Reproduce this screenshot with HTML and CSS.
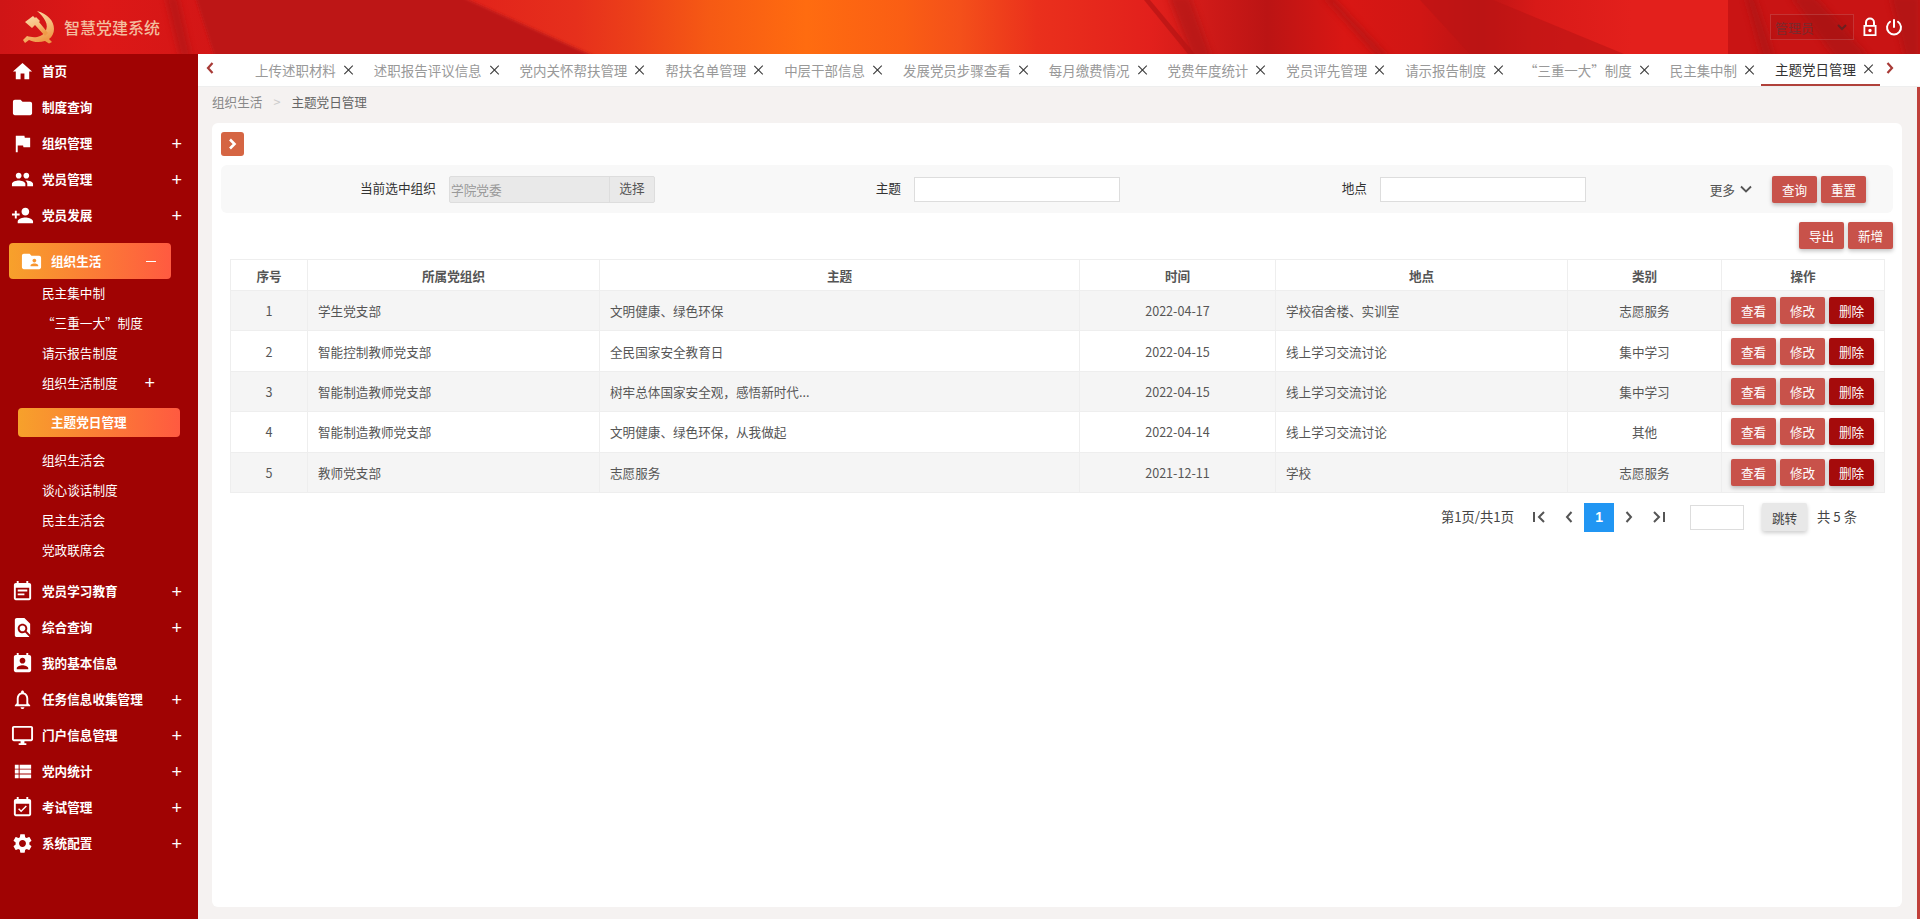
FILE: index.html
```html
<!DOCTYPE html>
<html lang="zh-CN">

<head>
    <meta charset="UTF-8">
    <meta name="viewport" content="width=device-width, initial-scale=1.0">
    <title>智慧党建系统</title>
    <link rel="stylesheet" href="styles.css">
</head>

<body>
    <!-- icon set -->
    <svg class="icon-defs" aria-hidden="true">
        <symbol id="i-home" viewBox="0 0 24 24"><path d="M10 20v-6h4v6h5v-8h3L12 3 2 12h3v8z"/></symbol>
        <symbol id="i-folder" viewBox="0 0 24 24"><path d="M10 4H4c-1.1 0-1.99.9-1.99 2L2 18c0 1.1.9 2 2 2h16c1.1 0 2-.9 2-2V8c0-1.1-.9-2-2-2h-8l-2-2z"/></symbol>
        <symbol id="i-flag" viewBox="0 0 24 24"><path d="M14.4 6L14 4H5v17h2v-7h5.6l.4 2h7V6z"/></symbol>
        <symbol id="i-people" viewBox="0 0 24 24"><path d="M16 11c1.66 0 2.99-1.34 2.99-3S17.66 5 16 5c-1.66 0-3 1.34-3 3s1.34 3 3 3zm-8 0c1.66 0 2.99-1.34 2.99-3S9.66 5 8 5C6.34 5 5 6.34 5 8s1.34 3 3 3zm0 2c-2.33 0-7 1.17-7 3.5V19h14v-2.5c0-2.33-4.67-3.5-7-3.5zm8 0c-.29 0-.62.02-.97.05 1.16.84 1.97 1.97 1.97 3.45V19h6v-2.5c0-2.33-4.67-3.5-7-3.5z"/></symbol>
        <symbol id="i-person-add" viewBox="0 0 24 24"><path d="M15 12c2.21 0 4-1.79 4-4s-1.79-4-4-4-4 1.79-4 4 1.79 4 4 4zm-9-2V7H4v3H1v2h3v3h2v-3h3v-2H6zm9 4c-2.67 0-8 1.34-8 4v2h16v-2c0-2.66-5.33-4-8-4z"/></symbol>
        <symbol id="i-folder-shared" viewBox="0 0 24 24"><path d="M20 6h-8l-2-2H4c-1.1 0-1.99.9-1.99 2L2 18c0 1.1.9 2 2 2h16c1.1 0 2-.9 2-2V8c0-1.1-.9-2-2-2zm-5 3c1.1 0 2 .9 2 2s-.9 2-2 2-2-.9-2-2 .9-2 2-2zm4 8h-8v-1c0-1.33 2.67-2 4-2s4 .67 4 2v1z"/></symbol>
        <symbol id="i-event-note" viewBox="0 0 24 24"><path d="M17 10H7v2h10v-2zm2-7h-1V1h-2v2H8V1H6v2H5c-1.11 0-1.99.9-1.99 2L3 19c0 1.1.89 2 2 2h14c1.1 0 2-.9 2-2V5c0-1.1-.9-2-2-2zm0 16H5V8h14v11zm-5-5H7v2h7v-2z"/></symbol>
        <symbol id="i-find" viewBox="0 0 24 24"><path d="M20 19.59V8l-6-6H6c-1.1 0-1.99.9-1.99 2L4 20c0 1.1.89 2 1.99 2H18c.45 0 .85-.15 1.19-.4l-4.43-4.43c-.8.52-1.74.83-2.76.83-2.76 0-5-2.24-5-5s2.24-5 5-5 5 2.24 5 5c0 1.02-.31 1.96-.83 2.75L20 19.59zM9 13c0 1.66 1.34 3 3 3s3-1.34 3-3-1.34-3-3-3-3 1.34-3 3z"/></symbol>
        <symbol id="i-contact" viewBox="0 0 24 24"><path d="M19 3h-1V1h-2v2H8V1H6v2H5c-1.11 0-2 .9-2 2v14c0 1.1.89 2 2 2h14c1.1 0 2-.9 2-2V5c0-1.1-.9-2-2-2zm-7 3c1.66 0 3 1.34 3 3s-1.34 3-3 3-3-1.34-3-3 1.34-3 3-3zm6 12H6v-1c0-2 4-3.1 6-3.1s6 1.1 6 3.1v1z"/></symbol>
        <symbol id="i-bell" viewBox="0 0 24 24"><path d="M12 22c1.1 0 2-.9 2-2h-4c0 1.1.9 2 2 2zm6-6v-5c0-3.07-1.63-5.64-4.5-6.32V4c0-.83-.67-1.5-1.5-1.5s-1.5.67-1.5 1.5v.68C7.64 5.36 6 7.92 6 11v5l-2 2v1h16v-1l-2-2zm-2 1H8v-6c0-2.48 1.51-4.5 4-4.5s4 2.02 4 4.5v6z"/></symbol>
        <symbol id="i-desktop" viewBox="0 0 24 24"><path d="M21 2H3c-1.1 0-2 .9-2 2v12c0 1.1.9 2 2 2h7v2H8v2h8v-2h-2v-2h7c1.1 0 2-.9 2-2V4c0-1.1-.9-2-2-2zm0 14H3V4h18v12z"/></symbol>
        <symbol id="i-list" viewBox="0 0 24 24"><path d="M4 14h4v-4H4v4zm0 5h4v-4H4v4zM4 9h4V5H4v4zm5 5h12v-4H9v4zm0 5h12v-4H9v4zM9 5v4h12V5H9z"/></symbol>
        <symbol id="i-event-ok" viewBox="0 0 24 24"><path d="M16.53 11.06L15.47 10l-4.88 4.88-2.12-2.12-1.06 1.06L10.59 17l5.94-5.94zM19 3h-1V1h-2v2H8V1H6v2H5c-1.11 0-1.99.9-1.99 2L3 19c0 1.1.89 2 2 2h14c1.1 0 2-.9 2-2V5c0-1.1-.9-2-2-2zm0 16H5V8h14v11z"/></symbol>
        <symbol id="i-settings" viewBox="0 0 24 24"><path d="M19.14 12.94c.04-.3.06-.61.06-.94 0-.32-.02-.64-.07-.94l2.03-1.58c.18-.14.23-.41.12-.61l-1.92-3.32c-.12-.22-.37-.29-.59-.22l-2.39.96c-.5-.38-1.03-.7-1.62-.94l-.36-2.54c-.04-.24-.24-.41-.48-.41h-3.84c-.24 0-.43.17-.47.41l-.36 2.54c-.59.24-1.13.57-1.62.94l-2.39-.96c-.22-.08-.47 0-.59.22L2.74 8.87c-.12.21-.08.47.12.61l2.03 1.58c-.05.3-.09.63-.09.94s.02.64.07.94l-2.03 1.58c-.18.14-.23.41-.12.61l1.92 3.32c.12.22.37.29.59.22l2.39-.96c.5.38 1.03.7 1.62.94l.36 2.54c.05.24.24.41.48.41h3.84c.24 0 .44-.17.47-.41l.36-2.54c.59-.24 1.13-.56 1.62-.94l2.39.96c.22.08.47 0 .59-.22l1.92-3.32c.12-.22.07-.47-.12-.61l-2.01-1.58zM12 15.6c-1.98 0-3.6-1.62-3.6-3.6s1.62-3.6 3.6-3.6 3.6 1.62 3.6 3.6-1.62 3.6-3.6 3.6z"/></symbol>
    </svg>

    <header class="header">
        <svg class="header-bg" viewBox="0 0 1920 54" preserveAspectRatio="none" aria-hidden="true">
            <defs>
                <linearGradient id="bannerBase" gradientUnits="userSpaceOnUse" x1="0" y1="0" x2="1920" y2="0">
                    <stop offset="0" stop-color="#cf1516"/>
                    <stop offset="0.05" stop-color="#dd1817"/>
                    <stop offset="0.13" stop-color="#d01616"/>
                    <stop offset="0.25" stop-color="#e2241b"/>
                    <stop offset="0.3" stop-color="#e6301c"/>
                    <stop offset="0.33" stop-color="#ec4019"/>
                    <stop offset="0.37" stop-color="#f65a14"/>
                    <stop offset="0.42" stop-color="#ff6c10"/>
                    <stop offset="0.47" stop-color="#fa5e14"/>
                    <stop offset="0.5" stop-color="#f4501a"/>
                    <stop offset="0.54" stop-color="#ea301c"/>
                    <stop offset="0.6" stop-color="#e2201c"/>
                    <stop offset="0.66" stop-color="#bb1414"/>
                    <stop offset="0.7" stop-color="#d91714"/>
                    <stop offset="0.74" stop-color="#d01614"/>
                    <stop offset="0.77" stop-color="#bc1414"/>
                    <stop offset="0.8" stop-color="#d81a18"/>
                    <stop offset="0.85" stop-color="#e3201c"/>
                    <stop offset="1" stop-color="#e3201c"/>
                </linearGradient>
                <filter id="soft" x="-20%" y="-20%" width="140%" height="140%"><feGaussianBlur stdDeviation="3"/></filter>
                <filter id="edge" x="-5%" y="-20%" width="110%" height="140%"><feGaussianBlur stdDeviation="1.5"/></filter>
            </defs>
            <rect width="1920" height="54" fill="url(#bannerBase)"/>
            <polygon points="195,-4 460,-4 598,58 215,58" fill="#bd1414" filter="url(#edge)"/>
            <g filter="url(#soft)" fill="#a81212" opacity="0.55">
                <polygon points="165,-4 178,-4 192,58 180,58"/>
                <polygon points="1168,-4 1190,-4 1212,58 1192,58"/>
                <polygon points="1322,-4 1332,-4 1390,58 1378,58"/>
            </g>
            <polygon points="1144,0 1150,0 1195,54 1188,54" fill="#b51414" opacity="0.7"/>
            <polygon points="1420,0 1493,0 1624,54 1470,54" fill="#bb1414" opacity="0.6"/>
            <rect x="1728" width="192" height="54" fill="#c91414"/>
            <g filter="url(#soft)" fill="#a81212" opacity="0.6">
                <polygon points="1745,-4 1755,-4 1775,58 1762,58"/>
                <polygon points="1790,-4 1815,-4 1870,58 1835,58"/>
                <polygon points="1890,-4 1920,-4 1920,58 1905,58"/>
            </g>
        </svg>

        <div class="brand">
            <svg class="brand-logo" viewBox="0 0 32 33" aria-hidden="true">
                <defs>
                    <linearGradient id="gold" x1="0" y1="0" x2="0.4" y2="1">
                        <stop offset="0" stop-color="#fbdca8"/>
                        <stop offset="0.6" stop-color="#f6bd7c"/>
                        <stop offset="1" stop-color="#ef9a48"/>
                    </linearGradient>
                </defs>
                <path fill="url(#gold)" d="M14 0C25 3 31 10 31 18C31 22 29 26 26 28L29 31L26 32.5L22 30C16 32 10 31 6 29L2 32L0 29L4 25C10 27 18 27 22 21C27 14 21 6 14 0Z"/>
                <path fill="url(#gold)" d="M2 11L10 5L12 7L13 6L17 10L16 11L25 22L22 25L12 14L9 17Z"/>
            </svg>
            <span class="brand-name">智慧党建系统</span>
        </div>

        <div class="header-tools">
            <div class="role-select">
                <span>管理员</span>
                <svg width="10" height="7" viewBox="0 0 10 7" aria-hidden="true"><path d="M1 1l4 4 4-4" fill="none" stroke="#6b2020" stroke-width="2"/></svg>
            </div>
            <svg class="tool-icon" width="16" height="20" viewBox="0 0 16 20" aria-hidden="true">
                <path fill="#fff" d="M3 8V5.5a5 5 0 0 1 10 0V8h1.5v11h-13V8zM5 8h6V5.5a3 3 0 0 0-6 0zM3.3 9.8v7.4h9.4V9.800zM8 11.800a1.700 1.700 0 1 1 0 3.400 1.700 1.700 0 0 1 0-3.400z"/>
            </svg>
            <svg class="tool-icon" width="18" height="18" viewBox="0 0 18 18" aria-hidden="true">
                <path fill="none" stroke="#fff" stroke-width="2" stroke-linecap="round" d="M9 2v7M5 3.800a7 7 0 1 0 8 0"/>
            </svg>
        </div>
    </header>

    <div class="layout">
        <nav class="sidebar">
            <a class="nav-item"><svg class="nav-icon"><use href="#i-home"/></svg><span>首页</span></a>
            <a class="nav-item"><svg class="nav-icon"><use href="#i-folder"/></svg><span>制度查询</span></a>
            <a class="nav-item"><svg class="nav-icon"><use href="#i-flag"/></svg><span>组织管理</span><i class="nav-plus">+</i></a>
            <a class="nav-item"><svg class="nav-icon"><use href="#i-people"/></svg><span>党员管理</span><i class="nav-plus">+</i></a>
            <a class="nav-item"><svg class="nav-icon"><use href="#i-person-add"/></svg><span>党员发展</span><i class="nav-plus">+</i></a>

            <a class="nav-item nav-open"><svg class="nav-icon"><use href="#i-folder-shared"/></svg><span>组织生活</span><i class="nav-minus"></i></a>
            <div class="subnav">
                <a class="sub-item">民主集中制</a>
                <a class="sub-item">“三重一大”制度</a>
                <a class="sub-item">请示报告制度</a>
                <a class="sub-item">组织生活制度<i class="sub-plus">+</i></a>
                <a class="sub-item sub-active">主题党日管理</a>
                <a class="sub-item">组织生活会</a>
                <a class="sub-item">谈心谈话制度</a>
                <a class="sub-item">民主生活会</a>
                <a class="sub-item">党政联席会</a>
            </div>

            <a class="nav-item"><svg class="nav-icon"><use href="#i-event-note"/></svg><span>党员学习教育</span><i class="nav-plus">+</i></a>
            <a class="nav-item"><svg class="nav-icon"><use href="#i-find"/></svg><span>综合查询</span><i class="nav-plus">+</i></a>
            <a class="nav-item"><svg class="nav-icon"><use href="#i-contact"/></svg><span>我的基本信息</span></a>
            <a class="nav-item"><svg class="nav-icon"><use href="#i-bell"/></svg><span>任务信息收集管理</span><i class="nav-plus">+</i></a>
            <a class="nav-item"><svg class="nav-icon"><use href="#i-desktop"/></svg><span>门户信息管理</span><i class="nav-plus">+</i></a>
            <a class="nav-item"><svg class="nav-icon"><use href="#i-list"/></svg><span>党内统计</span><i class="nav-plus">+</i></a>
            <a class="nav-item"><svg class="nav-icon"><use href="#i-event-ok"/></svg><span>考试管理</span><i class="nav-plus">+</i></a>
            <a class="nav-item"><svg class="nav-icon"><use href="#i-settings"/></svg><span>系统配置</span><i class="nav-plus">+</i></a>
        </nav>

        <main class="main">
            <div class="tabbar">
                <svg class="tab-arrow" width="8" height="12" viewBox="0 0 8 12" aria-hidden="true"><path d="M6.500 1L2 6l4.500 5" fill="none" stroke="#a83a36" stroke-width="2.200"/></svg>
                <div class="tabs">
                    <div class="tab">上传述职材料<i class="tab-close"></i></div>
                    <div class="tab">述职报告评议信息<i class="tab-close"></i></div>
                    <div class="tab">党内关怀帮扶管理<i class="tab-close"></i></div>
                    <div class="tab">帮扶名单管理<i class="tab-close"></i></div>
                    <div class="tab">中层干部信息<i class="tab-close"></i></div>
                    <div class="tab">发展党员步骤查看<i class="tab-close"></i></div>
                    <div class="tab">每月缴费情况<i class="tab-close"></i></div>
                    <div class="tab">党费年度统计<i class="tab-close"></i></div>
                    <div class="tab">党员评先管理<i class="tab-close"></i></div>
                    <div class="tab">请示报告制度<i class="tab-close"></i></div>
                    <div class="tab">“三重一大”制度<i class="tab-close"></i></div>
                    <div class="tab">民主集中制<i class="tab-close"></i></div>
                    <div class="tab tab-active">主题党日管理<i class="tab-close"></i></div>
                </div>
                <svg class="tab-arrow" width="8" height="12" viewBox="0 0 8 12" aria-hidden="true"><path d="M1.500 1L6 6l-4.500 5" fill="none" stroke="#a83a36" stroke-width="2.200"/></svg>
            </div>

            <div class="content">
                <div class="breadcrumb">
                    <span>组织生活</span>
                    <em>&gt;</em>
                    <span class="crumb-current">主题党日管理</span>
                </div>

                <section class="card">
                    <button class="toggle-btn" aria-label="展开">
                        <svg width="9" height="12" viewBox="0 0 9 12" aria-hidden="true"><path d="M2 1.500L6.500 6 2 10.500" fill="none" stroke="#fff" stroke-width="2.600"/></svg>
                    </button>

                    <div class="filter">
                        <div class="field">
                            <label>当前选中组织</label>
                            <div class="org-picker"><span class="org-name">学院党委</span><span class="org-choose">选择</span></div>
                        </div>
                        <div class="field">
                            <label>主题</label>
                            <input class="text-input" type="text">
                        </div>
                        <div class="field">
                            <label>地点</label>
                            <input class="text-input" type="text">
                        </div>
                        <div class="filter-actions">
                            <span class="more">更多
                                <svg width="12" height="8" viewBox="0 0 12 8" aria-hidden="true"><path d="M1 1.500l5 5 5-5" fill="none" stroke="#555" stroke-width="1.800"/></svg>
                            </span>
                            <button class="btn">查询</button>
                            <button class="btn">重置</button>
                        </div>
                    </div>

                    <div class="toolbar">
                        <button class="btn">导出</button>
                        <button class="btn">新增</button>
                    </div>

                    <table class="data-table">
                        <colgroup>
                            <col class="col-no">
                            <col class="col-org">
                            <col class="col-topic">
                            <col class="col-date">
                            <col class="col-place">
                            <col class="col-type">
                            <col class="col-ops">
                        </colgroup>
                        <thead>
                            <tr>
                                <th>序号</th>
                                <th>所属党组织</th>
                                <th>主题</th>
                                <th>时间</th>
                                <th>地点</th>
                                <th>类别</th>
                                <th>操作</th>
                            </tr>
                        </thead>
                        <tbody>
                            <tr>
                                <td class="center">1</td>
                                <td>学生党支部</td>
                                <td>文明健康、绿色环保</td>
                                <td class="center">2022-04-17</td>
                                <td>学校宿舍楼、实训室</td>
                                <td class="center">志愿服务</td>
                                <td class="ops"><button class="btn">查看</button><button class="btn">修改</button><button class="btn btn-danger">删除</button></td>
                            </tr>
                            <tr>
                                <td class="center">2</td>
                                <td>智能控制教师党支部</td>
                                <td>全民国家安全教育日</td>
                                <td class="center">2022-04-15</td>
                                <td>线上学习交流讨论</td>
                                <td class="center">集中学习</td>
                                <td class="ops"><button class="btn">查看</button><button class="btn">修改</button><button class="btn btn-danger">删除</button></td>
                            </tr>
                            <tr>
                                <td class="center">3</td>
                                <td>智能制造教师党支部</td>
                                <td>树牢总体国家安全观，感悟新时代...</td>
                                <td class="center">2022-04-15</td>
                                <td>线上学习交流讨论</td>
                                <td class="center">集中学习</td>
                                <td class="ops"><button class="btn">查看</button><button class="btn">修改</button><button class="btn btn-danger">删除</button></td>
                            </tr>
                            <tr>
                                <td class="center">4</td>
                                <td>智能制造教师党支部</td>
                                <td>文明健康、绿色环保，从我做起</td>
                                <td class="center">2022-04-14</td>
                                <td>线上学习交流讨论</td>
                                <td class="center">其他</td>
                                <td class="ops"><button class="btn">查看</button><button class="btn">修改</button><button class="btn btn-danger">删除</button></td>
                            </tr>
                            <tr>
                                <td class="center">5</td>
                                <td>教师党支部</td>
                                <td>志愿服务</td>
                                <td class="center">2021-12-11</td>
                                <td>学校</td>
                                <td class="center">志愿服务</td>
                                <td class="ops"><button class="btn">查看</button><button class="btn">修改</button><button class="btn btn-danger">删除</button></td>
                            </tr>
                        </tbody>
                    </table>

                    <div class="pager">
                        <span>第1页/共1页</span>
                        <a class="page-nav page-first"><svg width="14" height="12" viewBox="0 0 14 12" aria-hidden="true"><path d="M2 1v10M12 1L7 6l5 5" fill="none" stroke="#555" stroke-width="2"/></svg></a>
                        <a class="page-nav"><svg width="8" height="12" viewBox="0 0 8 12" aria-hidden="true"><path d="M6.500 1L2 6l4.500 5" fill="none" stroke="#555" stroke-width="2"/></svg></a>
                        <a class="page-num">1</a>
                        <a class="page-nav"><svg width="8" height="12" viewBox="0 0 8 12" aria-hidden="true"><path d="M1.500 1L6 6l-4.500 5" fill="none" stroke="#555" stroke-width="2"/></svg></a>
                        <a class="page-nav"><svg width="14" height="12" viewBox="0 0 14 12" aria-hidden="true"><path d="M12 1v10M2 1l5 5-5 5" fill="none" stroke="#555" stroke-width="2"/></svg></a>
                        <input class="page-input" type="text">
                        <button class="page-jump">跳转</button>
                        <span class="page-total">共 5 条</span>
                    </div>
                </section>
            </div>
        </main>
    </div>
</body>

</html>
```

FILE: styles.css
```css
* {
    margin: 0;
    padding: 0;
    box-sizing: border-box;
    font-family: "Noto Sans CJK SC", "Liberation Sans", sans-serif;
}

body {
    height: 100vh;
    display: flex;
    flex-direction: column;
    overflow: hidden;
    background: #f5f2f1;
}

a {
    color: inherit;
    text-decoration: none;
}

i,
em {
    font-style: normal;
}

button {
    border: none;
    cursor: pointer;
}

.icon-defs {
    position: absolute;
    width: 0;
    height: 0;
}

/* header */
.header {
    position: relative;
    flex: 0 0 54px;
    display: flex;
    align-items: center;
    justify-content: space-between;
}

.header-bg {
    position: absolute;
    left: 0;
    top: 0;
    width: 100%;
    height: 100%;
}

.brand {
    position: relative;
    display: flex;
    align-items: center;
    padding-left: 23px;
}

.brand-logo {
    width: 32px;
    height: 33px;
}

.brand-name {
    margin-left: 9px;
    font-size: 16px;
    line-height: 20px;
    font-weight: 500;
    color: #f3bd9f;
}

.header-tools {
    position: relative;
    display: flex;
    align-items: center;
    padding-right: 17px;
}

.role-select {
    width: 84px;
    height: 26px;
    margin-right: 8px;
    padding: 0 6px 0 4px;
    display: flex;
    align-items: center;
    justify-content: space-between;
    border: 1px solid rgba(255, 255, 255, 0.14);
    font-size: 13px;
    color: #7a2a2e;
    background: rgba(150, 16, 16, 0.25);
}

.tool-icon {
    margin-right: 7px;
}

.tool-icon:last-child {
    margin-right: 0;
}

/* layout */
.layout {
    flex: 1;
    min-height: 0;
    display: flex;
}

.sidebar {
    flex: 0 0 198px;
    background: #a00303;
    color: #fff;
}

.nav-item {
    height: 36px;
    padding-left: 11px;
    padding-bottom: 2px;
    display: flex;
    align-items: center;
    font-size: 12.6px;
    font-weight: 700;
}

.nav-item span {
    margin-top: -2px;
}

.nav-icon {
    flex: 0 0 23px;
    width: 23px;
    height: 23px;
    margin-right: 8px;
    fill: #fff;
}

.nav-plus {
    margin-left: auto;
    margin-right: 16px;
    margin-top: 2px;
    font-family: "Liberation Sans", sans-serif;
    font-size: 18px;
    font-weight: 400;
}

.nav-open {
    margin: 9px 27px 0 9px;
    border-radius: 4px;
    padding-bottom: 0;
    background: linear-gradient(90deg, #f7a12b, #ff5a40);
}

.nav-minus {
    width: 10px;
    height: 1px;
    margin-left: auto;
    margin-right: 15px;
    background: #fff;
}

.subnav {
    padding-bottom: 8px;
}

.sub-item {
    height: 30px;
    padding-left: 42px;
    padding-bottom: 3px;
    display: flex;
    align-items: center;
    font-size: 12.6px;
    color: #fff;
}

.sub-plus {
    margin-left: 27px;
    margin-top: 2px;
    font-family: "Liberation Sans", sans-serif;
    font-size: 18px;
}

.sub-active {
    height: 29px;
    margin: 9px 18px 9px 18px;
    padding-left: 33px;
    padding-bottom: 2px;
    border-radius: 4px;
    font-weight: 700;
    background: linear-gradient(90deg, #f7a12b, #ff5a40);
}

/* tabs */
.main {
    flex: 1;
    min-width: 0;
    display: flex;
    flex-direction: column;
}

.tabbar {
    flex: 0 0 33px;
    display: flex;
    align-items: center;
    background: #fff;
    border-bottom: 1px solid #eeeeee;
}

.tab-arrow {
    flex: 0 0 8px;
    margin-top: -5px;
    margin-left: 8px;
}

.tabs {
    flex: 1;
    min-width: 0;
    height: 32px;
    margin-left: 27px;
    display: flex;
}

.tab {
    padding: 0 6px 0 14px;
    display: flex;
    align-items: center;
    white-space: nowrap;
    font-size: 13.47px;
    color: #999;
}

.tab-active {
    color: #333;
    border-bottom: 2px solid #b0413a;
}

.tab-close {
    position: relative;
    width: 10px;
    height: 10px;
    margin-left: 8px;
}

.tab-close:before,
.tab-close:after {
    content: "";
    position: absolute;
    left: 4px;
    top: -1px;
    width: 1.4px;
    height: 12px;
    background: #333;
    transform: rotate(45deg);
}

.tab-close:after {
    transform: rotate(-45deg);
}

.tabbar > .tab-arrow:last-child {
    margin-right: 26px;
    margin-left: 9px;
}

/* content */
.content {
    flex: 1;
    min-height: 0;
    display: flex;
    flex-direction: column;
    border-right: 3px solid #c0403a;
}

.breadcrumb {
    flex: 0 0 36px;
    padding-left: 14px;
    padding-bottom: 7px;
    display: flex;
    align-items: center;
    font-size: 12.6px;
    color: #888;
}

.breadcrumb em {
    margin: 0 11px;
    color: #ccc;
}

.crumb-current {
    color: #666;
}

.card {
    flex: 1;
    margin: 0 15px 12px 14px;
    padding: 9px;
    border-radius: 6px;
    background: #fff;
}

.toggle-btn {
    width: 23px;
    height: 24px;
    display: flex;
    align-items: center;
    justify-content: center;
    border-radius: 3px;
    background: #d56543;
}

.filter {
    height: 48px;
    margin-top: 9px;
    display: grid;
    grid-template-columns: 434px 465px 466px 1fr;
    align-items: center;
    border-radius: 6px;
    background: #f8f8f8;
    font-size: 12.7px;
    color: #333;
}

.field {
    display: flex;
    align-items: center;
    justify-content: flex-end;
}

.field label {
    margin-right: 13px;
    margin-top: -3px;
}

.org-picker {
    width: 206px;
    height: 27px;
    display: flex;
    border: 1px solid #ddd;
    border-radius: 2px;
    background: #e9e9e9;
}

.org-name {
    flex: 1;
    padding-left: 1px;
    line-height: 25px;
    color: #999;
}

.org-choose {
    flex: 0 0 45px;
    line-height: 21px;
    text-align: center;
    color: #555;
    border-left: 1px solid #ddd;
}

.text-input {
    width: 206px;
    height: 25px;
    border: 1px solid #ddd;
    background: #fff;
}

.filter-actions {
    display: flex;
    align-items: center;
    justify-content: flex-end;
    padding-right: 27px;
}

.more {
    display: flex;
    align-items: center;
    margin-right: 16px;
    color: #555;
}

.more svg {
    margin-left: 5px;
}

.btn {
    width: 45px;
    height: 27px;
    margin-left: 4px;
    border-radius: 2px;
    background: #c8524a;
    color: #fff;
    font-size: 12.6px;
    box-shadow: 0 2px 4px rgba(0, 0, 0, 0.25);
}

.btn-danger {
    background: #a50b0b;
}

.toolbar {
    margin-top: 9px;
    display: flex;
    justify-content: flex-end;
}

/* table */
.data-table {
    width: 1654px;
    margin: 10px 0 0 9px;
    table-layout: fixed;
    border-collapse: collapse;
    font-size: 12.6px;
    color: #555;
}

.col-no { width: 77px; }
.col-org { width: 292px; }
.col-topic { width: 480px; }
.col-date { width: 196px; }
.col-place { width: 292px; }
.col-type { width: 154px; }
.col-ops { width: 163px; }

.data-table th,
.data-table td {
    border: 1px solid #eeeeee;
}

.data-table th {
    height: 31px;
    font-weight: 700;
    color: #555;
}

.data-table td {
    height: 40.4px;
    padding: 0 10px;
    color: #555;
}

.data-table tbody tr:nth-child(odd) {
    background: #f5f5f5;
}

.data-table .center {
    text-align: center;
}

.data-table .ops {
    padding: 0 0 0 9px;
    white-space: nowrap;
    text-align: left;
}

.ops .btn:first-child {
    margin-left: 0;
}

/* pagination */
.pager {
    margin-top: 10px;
    padding-right: 36px;
    display: flex;
    align-items: center;
    justify-content: flex-end;
    font-size: 13.3px;
    color: #444;
}

.pager span {
    margin-top: -2px;
}

.page-nav {
    width: 30px;
    height: 29px;
    display: flex;
    align-items: center;
    justify-content: center;
}

.page-first {
    margin-left: 10px;
}

.page-num {
    width: 30px;
    height: 29px;
    line-height: 29px;
    text-align: center;
    font-family: "Liberation Sans", sans-serif;
    font-size: 14px;
    font-weight: 700;
    color: #fff;
    background: #2196f3;
}

.page-input {
    width: 54px;
    height: 25px;
    margin-left: 16px;
    border: 1px solid #ddd;
}

.page-jump {
    width: 45px;
    height: 28px;
    margin-left: 18px;
    border-radius: 2px;
    font-size: 12.6px;
    color: #444;
    background: #e8e8e8;
    box-shadow: 0 2px 4px rgba(0, 0, 0, 0.2);
}

.page-total {
    margin-left: 10px;
}
```
